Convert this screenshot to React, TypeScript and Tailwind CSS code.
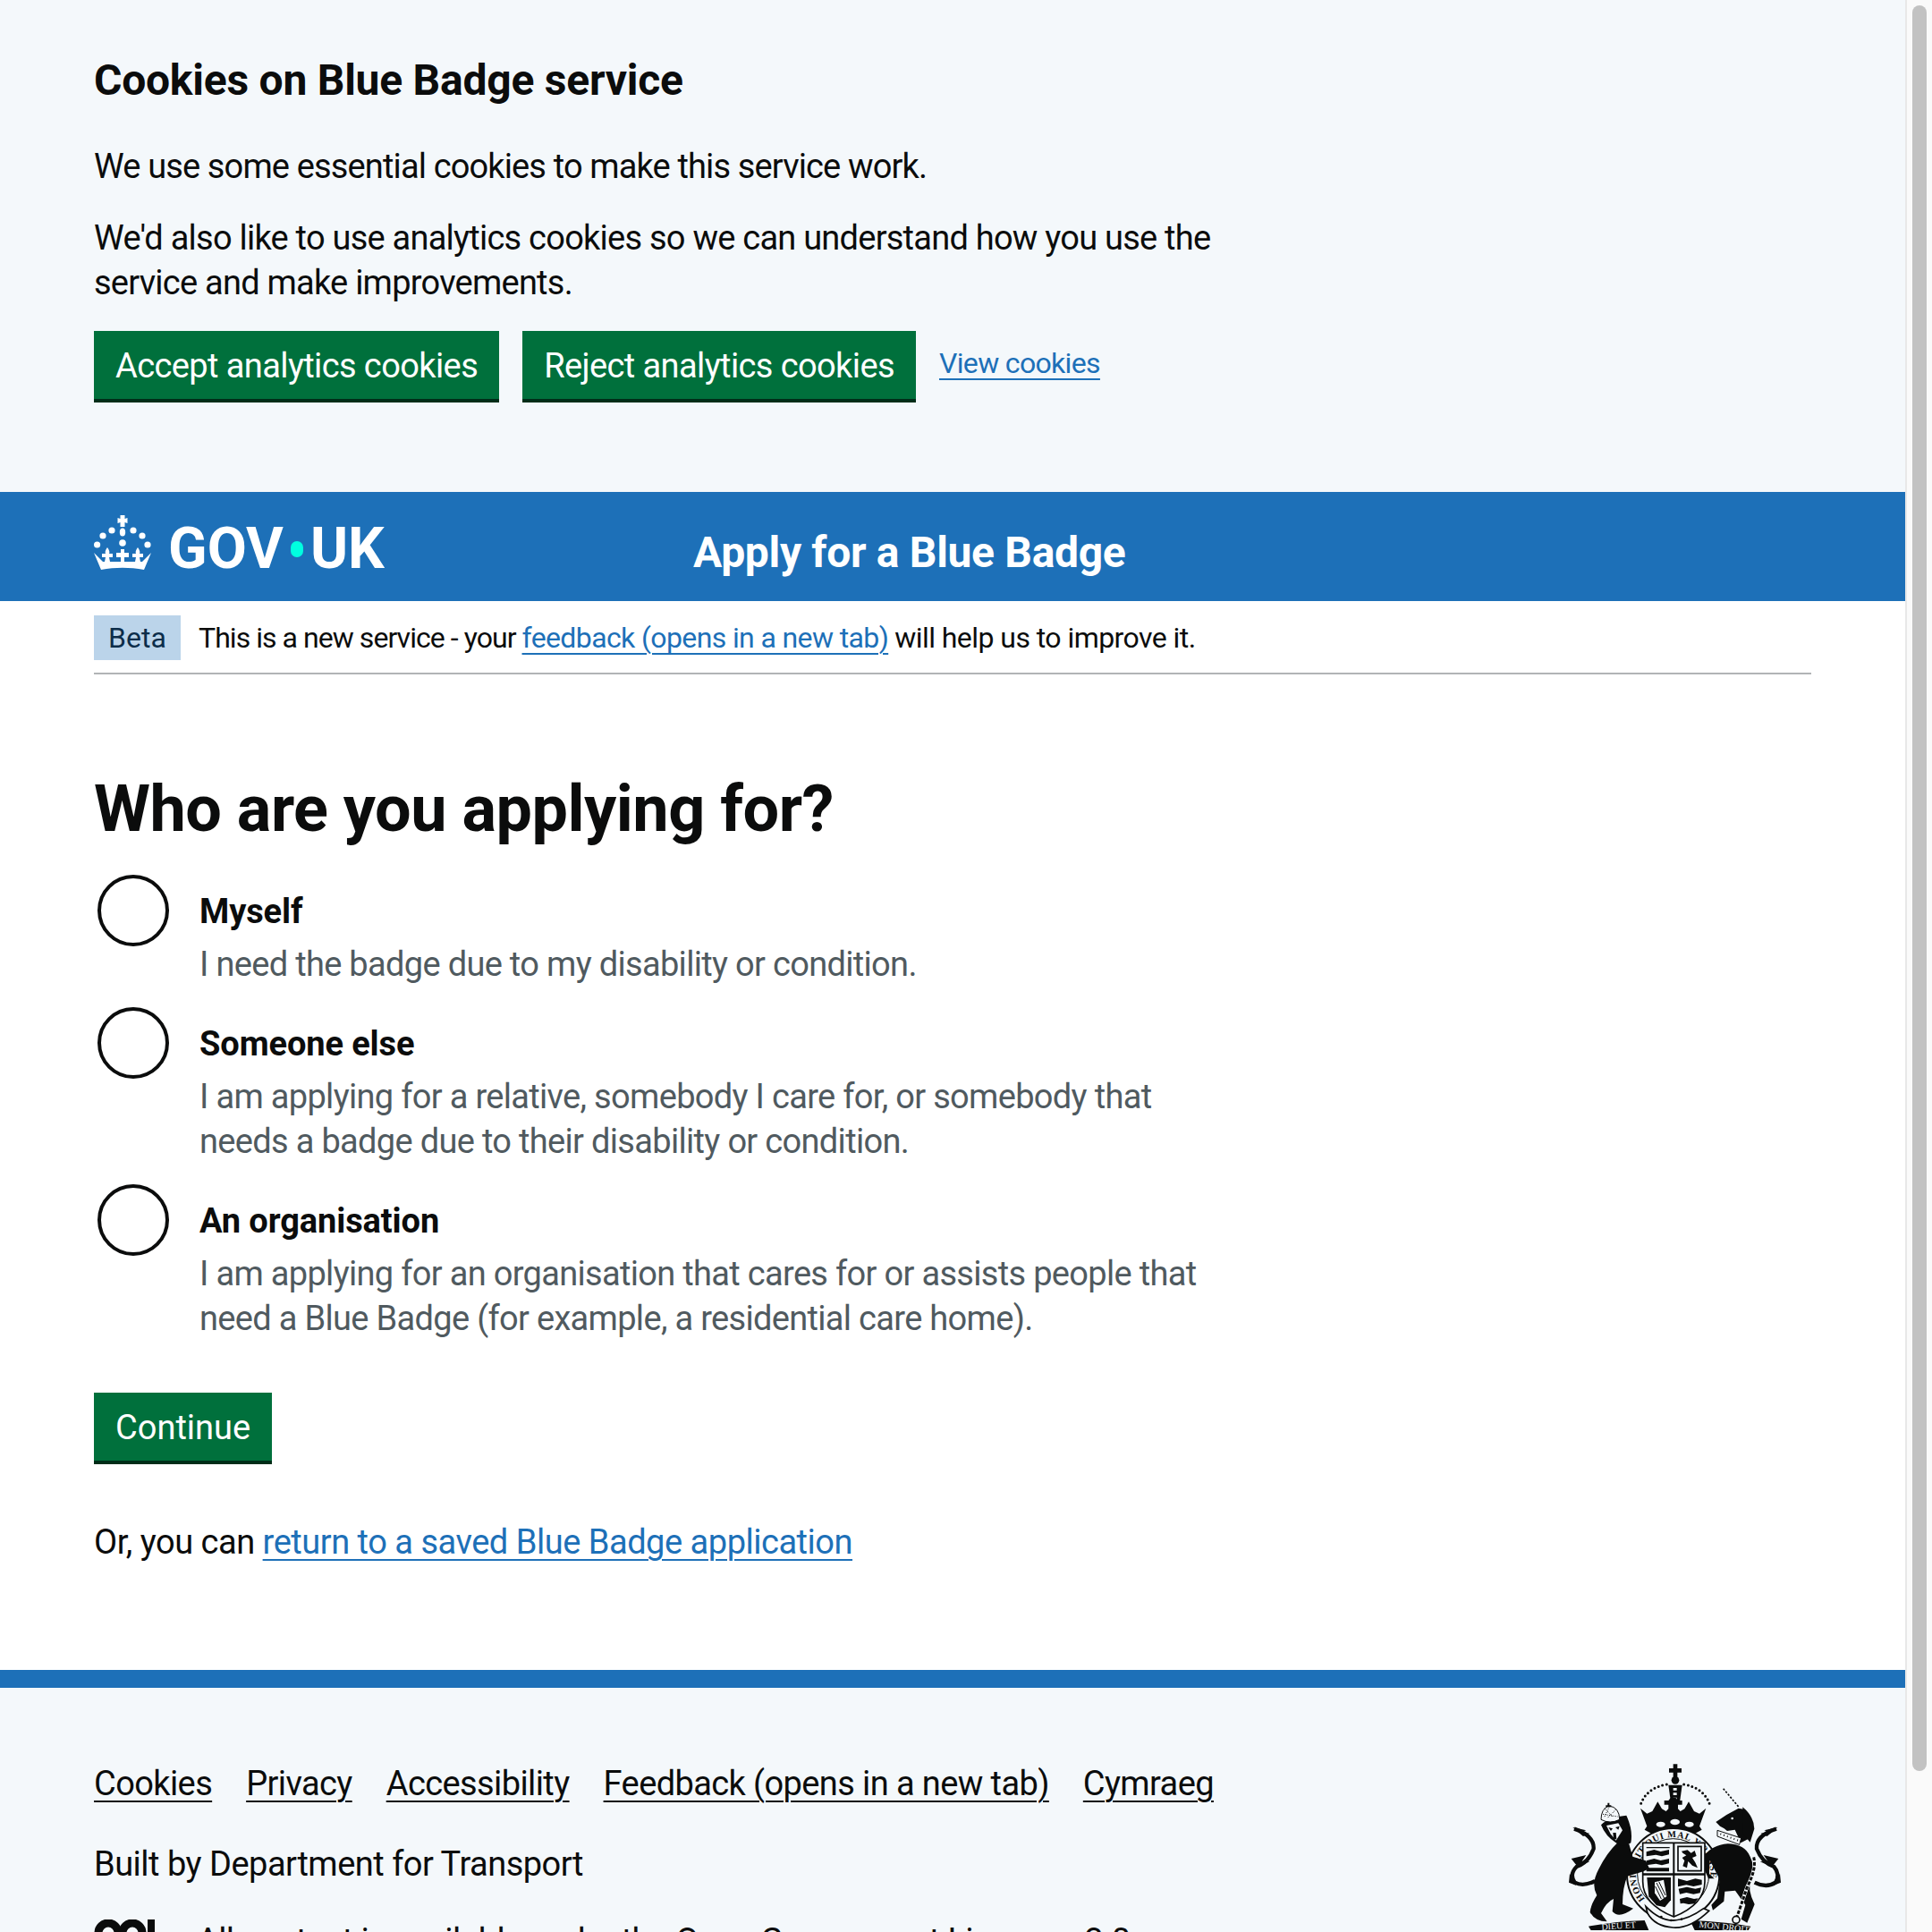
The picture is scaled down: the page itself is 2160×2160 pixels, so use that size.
const font = "font-['Roboto','Liberation_Sans',sans-serif]";

function Crown() {
  return (
    <svg viewBox="0 0 64 62" className="w-[64px] h-[62px] fill-white" aria-hidden="true">
      <path d="M29.5 1h5v4l3-1v6l-3-1v5h-5V9l-3 1V4l3 1z" />
      <ellipse cx="32" cy="20" rx="3.2" ry="4.5" />
      <circle cx="20" cy="18" r="3.6" />
      <circle cx="44" cy="18" r="3.6" />
      <circle cx="10" cy="24" r="3.6" />
      <circle cx="54" cy="24" r="3.6" />
      <circle cx="3.6" cy="34" r="3.6" />
      <circle cx="60" cy="34" r="3.6" />
      <circle cx="32" cy="32" r="3.8" />
      <path d="M30 39h4v4h5v5h-5v5h-4v-5h-5v-5h5z" />
      <path d="M15 37c2 3 3 5 2 7h4v4h-4l1 5h-6l1-5H9v-4h4c-1-2 0-4 2-7z" />
      <path d="M49 37c-2 3-3 5-2 7h-4v4h4l-1 5h6l-1-5h4v-4h-4c1-2 0-4-2-7z" />
      <path d="M0 43l8 8 2 2h44l2-2 8-8-8 19c-16-3-32-3-48 0z" />
    </svg>
  );
}

// coat of arms, cut off by the bottom of the page like the original
function Crest() {
  const ink = "#0b0c0c";
  const paper = "#f4f8fb";
  return (
    <svg viewBox="0 0 780 585" className="w-[260px] h-[195px]" fill={ink} aria-hidden="true">
      <defs>
        <path id="garter" d="M300 483 A125 125 0 1 1 484 483" />
      </defs>

      {/* tails */}
      <path d="M60 245 Q128 268 125 312 Q108 358 68 372 Q42 398 62 425 Q90 440 130 420" fill="none" stroke={ink} strokeWidth="13" />
      <path d="M55 240l45 10-18 6 30 4-22 10zM50 345l50-12-14 20 26 2-40 18zM45 395l-3 30 25 10-12-22z" />
      <path d="M738 245 Q668 268 672 312 Q690 358 730 372 Q752 398 735 425 Q705 445 665 425" fill="none" stroke={ink} strokeWidth="13" />
      <path d="M742 240l-45 10 18 6-30 4 22 10zM745 345l-50-12 14 20-26 2 40 18zM750 395l3 30-25 10 12-22z" />

      {/* crown */}
      <path d="M392 28h14v14h14v14h-14v18h-14V56h-14V42h14z" />
      <circle cx="399" cy="82" r="13" />
      <path d="M376 98h46l-8 58h-30z" />
      <path d="M392 108h12v8h-12zM392 124h12v8h-12zM392 140h12v8h-12z" fill={paper} />
      <path d="M370 96 Q300 108 281 168" fill="none" stroke={ink} strokeWidth="9" strokeLinecap="round" strokeDasharray="0 14" />
      <path d="M428 96 Q498 108 516 168" fill="none" stroke={ink} strokeWidth="9" strokeLinecap="round" strokeDasharray="0 14" />
      <path d="M282 176l22 18 18-8 18-32 14 24 14 8 8-8v-14h-14v-14h14l8-10h16l8 10h14v14h-14v14l8 8 14-8 14-24 18 32 18 8 22-18-22 60 8 12-44 24H340l-44-24 8-12z" />
      <ellipse cx="350" cy="230" rx="15" ry="9" fill={paper} />
      <ellipse cx="398" cy="222" rx="16" ry="10" fill={paper} />
      <ellipse cx="446" cy="230" rx="15" ry="9" fill={paper} />

      {/* garter */}
      <circle cx="392" cy="398" r="155" fill={paper} stroke={ink} strokeWidth="6" />
      <circle cx="392" cy="398" r="120" fill={paper} stroke={ink} strokeWidth="3" />
      <text fontFamily="Liberation Serif, serif" fontSize="31" fontWeight="700" letterSpacing="2">
        <textPath href="#garter" startOffset="4">HONI SOIT QUI MAL Y PENSE</textPath>
      </text>

      {/* shield */}
      <path d="M290 292h208v130c0 58-50 96-104 118-54-22-104-60-104-118z" fill={paper} stroke={ink} strokeWidth="5" />
      <path d="M391 292h6v248h-6zM290 394h208v7H290z" />
      <path d="M302 306h78v4h-78zM302 322l26-7 22 6 28-6v16l-24 6-20-5-32 5zM302 352l26-7 22 6 28-6v16l-24 6-20-5-32 5zM302 376h76v12h-76z" />
      <path d="M408 304h78v82h-78z" fill="none" stroke={ink} strokeWidth="5" />
      <path d="M420 320l20-4 12 10 12-8 6 18-14 6 10 16 8 18-18-8-14-14-4 22-14-6 6-18-8-10 14-8-12-8z" />
      <path d="M408 412l30 8 28-8 22 4v16l-28 6-24-5-28 6zM410 446l28-6 28 6 20-4-4 18-22 4-24-5-22 5zM414 480l24-6 24 6 14-2-12 18-20 2-18-4-10 2z" />
      <path d="M304 408h80v76l-20 24-28-6-26-30z" />
      <path d="M330 424l30-8 10 56-22 14-18-26z" fill={paper} />
      <path d="M336 426l26 52M344 422l22 46M332 438l20 42" stroke={ink} strokeWidth="3" fill="none" />

      {/* lion */}
      <path d="M205 292 Q170 325 142 380 Q115 430 136 468 Q115 500 113 525 Q130 556 170 556 L150 528 Q168 490 192 480 L188 522 Q210 548 258 512 L222 498 Q222 442 238 404 L292 388 L312 378 L300 352 L256 338 L244 296z" />
      <path d="M150 232 Q175 205 235 200 Q258 250 250 292 Q225 312 200 292 Q165 270 150 232z" />
      <path d="M168 234l40-8 14 24-22 34-18-22z" fill={paper} />
      <path d="M175 240l14 4-6 8zM198 240l14-4-4 12zM190 258h10l2 22h-10z" />
      <path d="M150 214 Q150 178 176 168 Q212 172 212 214 Q180 230 150 214z" fill={paper} stroke={ink} strokeWidth="3" />
      <path d="M162 176l28 30M178 170l-18 38M200 180l-30 30M156 196l50 8" stroke={ink} strokeWidth="3" strokeDasharray="3 4" fill="none" />
      <path d="M172 158h6v8h6v6h-18v-6h6z" />

      {/* unicorn */}
      <path d="M560 110 L612 172" stroke={ink} strokeWidth="5" strokeDasharray="7 5" fill="none" />
      <path d="M535 222l36-24 40-22 22 4 20 44-8 54-26 14-20-44-26 4-10-8-14-8z" />
      <path d="M625 172 Q664 205 664 245 L650 290 L626 262z" />
      <circle cx="590" cy="210" r="4" fill={paper} />
      <path d="M540 250l80 26-6 22-74-28z" fill={paper} stroke={ink} strokeWidth="3" />
      <path d="M550 262l60 22" stroke={ink} strokeWidth="6" strokeDasharray="3 9" fill="none" />
      <path d="M498 335 Q520 300 575 295 Q632 296 650 338 Q668 372 652 408 Q640 450 665 498 L640 560 L620 548 L634 500 L600 452 L565 455 L562 488 L525 518 L520 500 L540 478 L548 415 L515 350 L512 395 L530 412 L510 412 L498 385z" />
      <path d="M662 340 Q672 380 640 440 Q620 500 604 545" fill="none" stroke={paper} strokeWidth="12" />
      <path d="M662 340 Q672 380 640 440 Q620 500 604 545" fill="none" stroke={ink} strokeWidth="9" strokeDasharray="12 5" />
      <circle cx="603" cy="550" r="12" fill={paper} stroke={ink} strokeWidth="5" />

      {/* motto */}
      <path d="M108 572 Q200 555 296 552 L310 585 H116z" />
      <path d="M448 552 Q550 555 652 572 L644 585 H464z" />
      <path d="M300 505 Q350 556 398 552 Q445 548 494 512 L512 520 Q450 580 392 576 Q330 572 306 528z" fill={paper} stroke={ink} strokeWidth="5" />
      <circle cx="352" cy="540" r="4" />
      <circle cx="385" cy="552" r="4" />
      <circle cx="420" cy="548" r="4" />
      <text x="152" y="584" fontFamily="Liberation Serif, serif" fontSize="30" fill={paper} transform="rotate(-4 152 584)">DIEU ET</text>
      <text x="478" y="575" fontFamily="Liberation Serif, serif" fontSize="30" fill={paper} transform="rotate(6 478 575)">MON DROIT</text>
    </svg>
  );
}

function OglLogo() {
  return (
    <svg viewBox="0 0 72 30" className="w-[72px] h-[30px]" aria-hidden="true">
      <circle cx="16" cy="15" r="11" fill="none" stroke="#0b0c0c" strokeWidth="9" />
      <circle cx="43" cy="15" r="11" fill="none" stroke="#0b0c0c" strokeWidth="9" />
      <path d="M60 0h8v30h-8z" fill="#0b0c0c" />
    </svg>
  );
}

function GreenButton({ label, tight }: { label: string; tight?: boolean }) {
  return (
    <button className={`h-[80px] bg-[#00703c] border-b-[4px] border-[#002d18] px-[24px] pt-[2px] text-[38px] leading-[50px] text-white ${tight ? "tracking-[-0.6px]" : ""}`}>
      {label}
    </button>
  );
}

function Radio({ label, hint }: { label: string; hint: string }) {
  return (
    <div className="flex mb-[21px]">
      <span className="w-[80px] h-[80px] ml-[4px] mt-[2px] shrink-0 rounded-full border-[4px] border-[#0b0c0c]" />
      <div className="ml-[34px]">
        <p className="h-[60px] pt-[18px] text-[38px] leading-[50px] font-bold tracking-[-0.1px] text-[#0b0c0c]">{label}</p>
        <p className="mt-[17px] text-[38px] leading-[50px] tracking-[-0.68px] text-[#505a5f]">{hint}</p>
      </div>
    </div>
  );
}

export default function App() {
  return (
    <div className={`${font} flex h-[2160px] overflow-hidden bg-white text-[#0b0c0c]`}>
      <div className="w-[2130px] shrink-0">
        {/* Cookie banner */}
        <section className="h-[550px] bg-[#f4f8fb] px-[105px] pt-[58px]">
          <h2 className="text-[48px] leading-[64px] font-bold tracking-[-0.24px]">Cookies on Blue Badge service</h2>
          <p className="mt-[39px] text-[38px] leading-[50px] tracking-[-0.86px]">We use some essential cookies to make this service work.</p>
          <p className="mt-[30px] w-[1300px] text-[38px] leading-[50px] tracking-[-0.76px]">
            We'd also like to use analytics cookies so we can understand how you use the service and make improvements.
          </p>
          <div className="mt-[29px] flex items-start gap-[26px]">
            <GreenButton label="Accept analytics cookies" tight />
            <GreenButton label="Reject analytics cookies" tight />
            <a className="mt-[11px] text-[32px] leading-[50px] tracking-[-0.66px] text-[#1d70b8] underline underline-offset-[6px] decoration-[2px]">View cookies</a>
          </div>
        </section>

        {/* Header */}
        <header className="h-[122px] bg-[#1d70b8] px-[105px] flex items-start text-white">
          <div className="mt-[25px]"><Crown /></div>
          <div className="ml-[19px] w-[587px] mt-[27px] flex items-center text-[64px] leading-[74px] font-bold">
            GOV<span className="mx-[8px] w-[14px] h-[18px] rounded-full bg-[#00ffe0]" />UK
          </div>
          <div className="mt-[36px] text-[48px] leading-[64px] font-bold tracking-[-0.32px]">Apply for a Blue Badge</div>
        </header>

        <main className="px-[105px]">
          {/* Phase banner */}
          <div className="h-[82px] border-b-[2px] border-[#b1b4b6] pt-[16px] flex items-start">
            <span className="h-[50px] w-[97px] bg-[#bbd4ea] text-[#0c2d4a] text-[32px] leading-[50px] text-center">Beta</span>
            <p className="ml-[20px] text-[32px] leading-[50px] tracking-[-0.95px]">
              This is a new service - your{" "}
              <a className="text-[#1d70b8] tracking-[-0.62px] underline underline-offset-[6px] decoration-[2px]">feedback (opens in a new tab)</a>{" "}
              <span className="tracking-[-0.55px]">will help us to improve it.</span>
            </p>
          </div>

          <h1 className="mt-[111px] text-[72px] leading-[80px] font-bold tracking-[-0.5px]">Who are you applying for?</h1>

          <div className="mt-[31px] w-[1265px]">
            <Radio label="Myself" hint="I need the badge due to my disability or condition." />
            <Radio label="Someone else" hint="I am applying for a relative, somebody I care for, or somebody that needs a badge due to their disability or condition." />
            <Radio label="An organisation" hint="I am applying for an organisation that cares for or assists people that need a Blue Badge (for example, a residential care home)." />
          </div>

          <div className="mt-[58px]">
            <GreenButton label="Continue" />
          </div>

          <p className="mt-[62px] text-[38px] leading-[50px] tracking-[-0.48px]">
            Or, you can{" "}
            <a className="text-[#1d70b8] underline underline-offset-[6px] decoration-[2px]">return to a saved Blue Badge application</a>
          </p>
        </main>

        {/* Footer */}
        <footer className="mt-[118px] border-t-[20px] border-[#1d70b8] bg-[#f4f8fb] h-[400px] pl-[105px] pr-[130px] pt-[82px] flex justify-between">
          <div>
            <ul className="flex gap-[38px] text-[38px] leading-[50px] tracking-[-0.6px]">
              {["Cookies", "Privacy", "Accessibility", "Feedback (opens in a new tab)", "Cymraeg"].map((l) => (
                <li key={l}><a className="underline underline-offset-[6px] decoration-[2px]">{l}</a></li>
              ))}
            </ul>
            <p className="mt-[40px] text-[38px] leading-[50px] tracking-[-0.5px]">Built by Department for Transport</p>
            <div className="mt-[37px] flex">
              <OglLogo />
              <p className="ml-[43px] -mt-[1px] w-[1100px] text-[38px] leading-[50px] tracking-[-0.6px]">All content is available under the Open Government Licence v3.0, except where otherwise stated</p>
            </div>
          </div>
          <div className="-mt-[6px]"><Crest /></div>
        </footer>
      </div>

      {/* Scrollbar */}
      <div className="w-[30px] shrink-0 bg-[#fafafa] border-l-[2px] border-[#e8e8e8] pl-[6px] pt-[6px]">
        <div className="w-[16px] h-[1974px] rounded-full bg-[#c2c2c2]" />
      </div>
    </div>
  );
}
